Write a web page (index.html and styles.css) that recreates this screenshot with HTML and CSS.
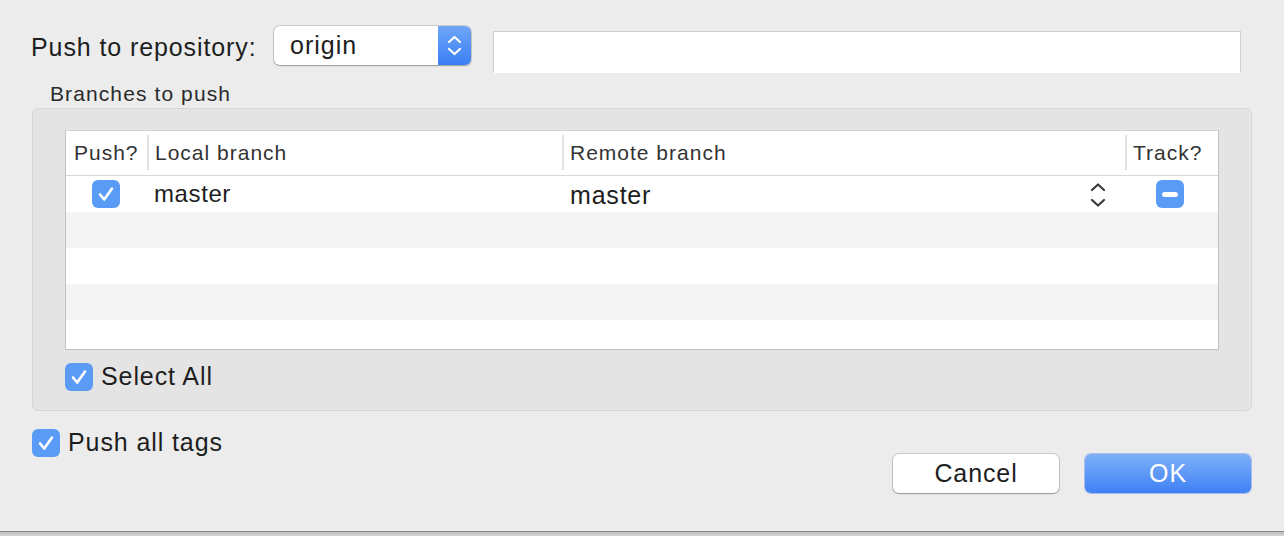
FILE: index.html
```html
<!DOCTYPE html>
<html>
<head>
<meta charset="utf-8">
<link rel="stylesheet" href="styles.css">
</head>
<body>
<div class="dialog">
  <div class="repo-row">
    <span class="repo-label">Push to repository:</span>
    <div class="popup">
      <span class="popup-text">origin</span>
      <span class="popup-arrows">
        <svg width="33" height="39" viewBox="0 0 33 39"><path d="M11 16 L16.5 11 L22 16 M11 23 L16.5 28 L22 23" fill="none" stroke="#fff" stroke-width="2.2" stroke-linecap="round" stroke-linejoin="round"/></svg>
      </span>
    </div>
    <div class="textfield"></div>
  </div>
  <div class="group-label">Branches to push</div>
  <div class="group">
    <div class="table">
      <div class="thead">
        <div class="th c-push">Push?</div>
        <div class="th c-local">Local branch</div>
        <div class="th c-remote">Remote branch</div>
        <div class="th c-track">Track?</div>
      </div>
      <div class="tr">
        <div class="td c-push"><span class="cb"><svg width="28" height="28" viewBox="0 0 28 28"><path d="M8 14.5 L12.2 19.5 L20 8.5" fill="none" stroke="#fff" stroke-width="2.6" stroke-linecap="round" stroke-linejoin="round"/></svg></span></div>
        <div class="td c-local local-name">master</div>
        <div class="td c-remote remote-name">
          <span>master</span>
          <svg class="updown" width="18" height="26" viewBox="0 0 18 26"><path d="M3 8 L9 2.5 L15 8 M3 18 L9 23.5 L15 18" fill="none" stroke="#3a3a3a" stroke-width="2.2" stroke-linecap="round" stroke-linejoin="round"/></svg>
        </div>
        <div class="td c-track"><span class="minus"><span class="bar"></span></span></div>
      </div>
      <div class="tr alt"></div>
      <div class="tr"></div>
      <div class="tr alt"></div>
      <div class="tr last"></div>
    </div>
    <label class="check select-all"><span class="cb"><svg width="28" height="28" viewBox="0 0 28 28"><path d="M8 14.5 L12.2 19.5 L20 8.5" fill="none" stroke="#fff" stroke-width="2.6" stroke-linecap="round" stroke-linejoin="round"/></svg></span><span class="check-text">Select All</span></label>
  </div>
  <label class="check tags"><span class="cb"><svg width="28" height="28" viewBox="0 0 28 28"><path d="M8 14.5 L12.2 19.5 L20 8.5" fill="none" stroke="#fff" stroke-width="2.6" stroke-linecap="round" stroke-linejoin="round"/></svg></span><span class="check-text">Push all tags</span></label>
  <div class="buttons">
    <button class="btn cancel">Cancel</button>
    <button class="btn ok">OK</button>
  </div>
</div>
<div class="bottom-edge"></div>
</body>
</html>
```
FILE: styles.css
```css
html, body {
  margin: 0;
  padding: 0;
}
body {
  width: 1284px;
  height: 536px;
  background: #ececec;
  font-family: "Liberation Sans", Arial, sans-serif;
  color: #1e1e1e;
  overflow: hidden;
  display: flex;
  flex-direction: column;
}
.dialog {
  height: 531px;
  box-sizing: border-box;
  padding-top: 26px;
}
.repo-row {
  display: flex;
  align-items: flex-start;
  height: 49px;
}
.repo-label {
  margin-left: 31px;
  margin-top: 7px;
  font-size: 25px;
  letter-spacing: 0.9px;
  width: 243px;
}
.popup {
  width: 197px;
  height: 39px;
  box-sizing: border-box;
  background: #fff;
  border-radius: 6px;
  box-shadow: 0 0 0 1px rgba(0,0,0,0.13), 0 1px 1.5px rgba(0,0,0,0.25);
  display: flex;
  overflow: hidden;
}
.popup-text {
  flex: 1;
  font-size: 25px;
  letter-spacing: 1px;
  padding-left: 16px;
  line-height: 39px;
}
.popup-arrows {
  width: 33px;
  height: 39px;
  background: linear-gradient(#6ea6f7, #3a7ff5);
  display: block;
}
.popup-arrows svg { display: block; }
.textfield {
  margin-left: 22px;
  margin-top: 5px;
  width: 748px;
  height: 42px;
  box-sizing: border-box;
  background: #fff;
  border: 1px solid #cfcfcf;
  border-bottom-color: #fff;
}
.group-label {
  margin-left: 50px;
  margin-top: 7px;
  font-size: 21px;
  letter-spacing: 1.1px;
  color: #2a2a2a;
  height: 26px;
}
.group {
  margin-left: 32px;
  width: 1220px;
  height: 303px;
  box-sizing: border-box;
  background: #e4e4e4;
  border: 1px solid #d6d6d6;
  border-radius: 6px;
  padding: 21px 0 0 32px;
}
.table {
  width: 1154px;
  height: 220px;
  box-sizing: border-box;
  border: 1px solid #c2c2c2;
  border-top-color: #d4d4d4;
  background: #fff;
  overflow: hidden;
}
.thead {
  display: flex;
  height: 45px;
  border-bottom: 1px solid #d8d8d8;
  box-sizing: border-box;
}
.th {
  font-size: 21px;
  letter-spacing: 1px;
  color: #333;
  line-height: 44px;
  padding-left: 8px;
  box-sizing: border-box;
  position: relative;
  white-space: nowrap;
}
.th + .th::before {
  content: "";
  position: absolute;
  left: 0;
  top: 4px;
  height: 35px;
  border-left: 2px solid #e2e2e2;
}
.c-push { width: 81px; }
.c-local { width: 415px; }
.c-remote { width: 563px; }
.c-track { flex: 1; }
.tr {
  display: flex;
  height: 36px;
  align-items: center;
}
.tr.alt { background: #f4f4f4; }
.tr.last { height: 28px; }
.td { box-sizing: border-box; }
.td.c-push {
  display: flex;
  justify-content: flex-start;
  padding-left: 26px;
}
.local-name {
  font-size: 24px;
  letter-spacing: 0.6px;
  padding-left: 7px;
}
.remote-name {
  font-size: 25px;
  letter-spacing: 0.8px;
  padding-left: 8px;
  display: flex;
  align-items: center;
  justify-content: space-between;
  padding-right: 18px;
  padding-top: 3px;
}
.remote-name .updown { display: block; margin-top: -2px; }
.td.c-track {
  display: flex;
  padding-left: 31px;
}
.cb {
  width: 28px;
  height: 28px;
  border-radius: 6px;
  background: #5a9bf6;
  display: block;
  flex: none;
}
.cb svg { display: block; }
.minus {
  width: 28px;
  height: 28px;
  border-radius: 6px;
  background: #5a9bf6;
  display: flex;
  align-items: center;
  justify-content: center;
}
.minus .bar {
  width: 16px;
  height: 5px;
  border-radius: 3px;
  background: #fff;
}
.check {
  display: flex;
  align-items: center;
}
.check-text {
  font-size: 25px;
  letter-spacing: 0.9px;
  margin-left: 8px;
}
.select-all {
  margin-top: 12px;
}
.tags {
  margin-left: 32px;
  margin-top: 17px;
}
.buttons {
  display: flex;
  justify-content: flex-end;
  gap: 26px;
  padding-right: 33px;
  margin-top: -3px;
}
.btn {
  width: 166px;
  height: 39px;
  border-radius: 6px;
  font-family: "Liberation Sans", Arial, sans-serif;
  font-size: 25px;
  letter-spacing: 0.9px;
  border: none;
  padding: 0;
}
.cancel {
  background: #fff;
  color: #1e1e1e;
  box-shadow: 0 0 0 1px rgba(0,0,0,0.14), 0 1px 1.5px rgba(0,0,0,0.25);
}
.ok {
  background: linear-gradient(#7eb1f8, #3f80f5);
  color: #fff;
  box-shadow: 0 0 0 1px rgba(40,100,220,0.35);
}
.bottom-edge {
  height: 5px;
  border-top: 1px solid #8a8a8a;
  background: linear-gradient(#bdbdbd, #d6d6d6);
  box-sizing: border-box;
}
```
